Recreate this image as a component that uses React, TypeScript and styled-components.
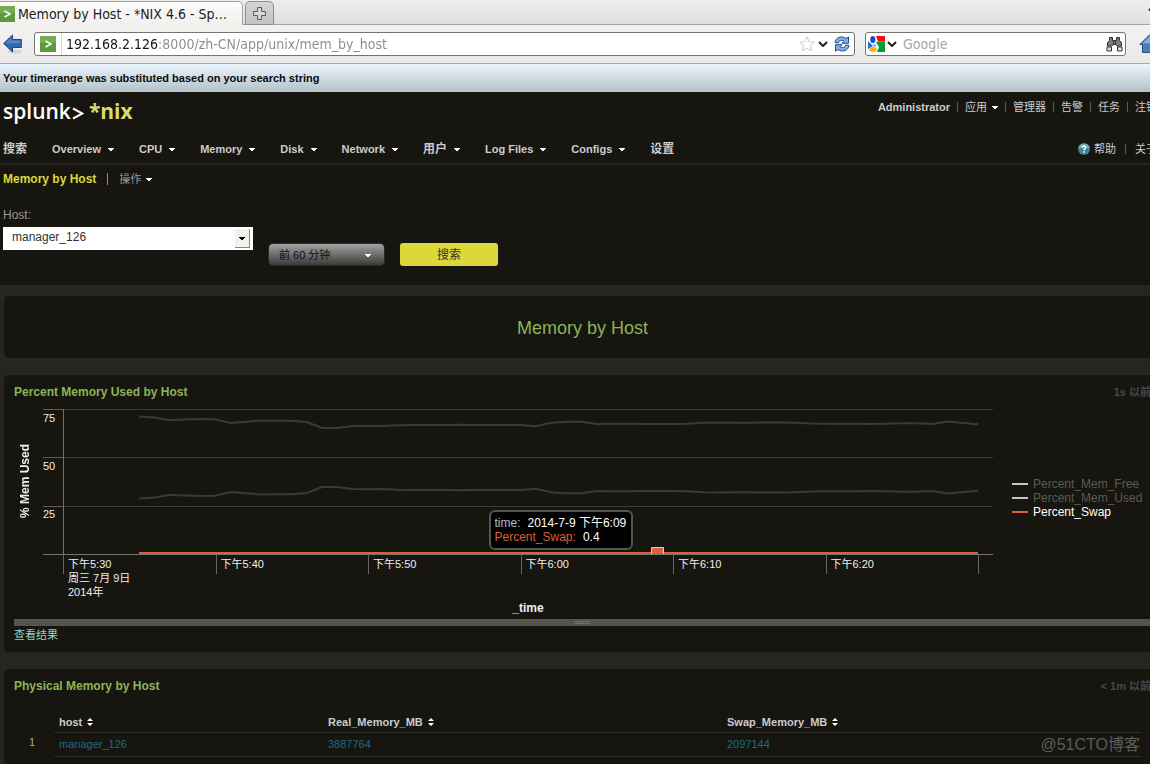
import React from "react";
import styled, { createGlobalStyle } from "styled-components";

const sans = `"Liberation Sans", "Noto Sans CJK SC", sans-serif`;
const chrome = `"DejaVu Sans Condensed", "DejaVu Sans", sans-serif`;
const ink = "#161510";
const stone = "#262522";
const orange = "#d95f3d";

const GlobalStyle = createGlobalStyle`
  *, *::before { box-sizing: border-box; }
  body {
    margin: 0;
    overflow: hidden;
    background: ${stone};
    color: #ccc;
    font: 11px/14px ${sans};
  }
  button, input, select { font: inherit; color: inherit; margin: 0; border: 0; padding: 0; background: none; }
  a { color: inherit; text-decoration: none; }
  svg { display: block; flex: none; }
`;

const Screen = styled.div`
  position: relative;
  min-height: 100vh;
  overflow: hidden;
`;

/* ---------- browser window ---------- */

const TabStrip = styled.div`
  display: flex;
  align-items: flex-end;
  gap: 2px;
  height: 25px;
  border-bottom: 1px solid #a3a3a0;
  background: linear-gradient(#ededeb, #e0dfdd);
`;

const Tab = styled.div`
  display: flex;
  align-items: center;
  gap: 3px;
  width: 243px;
  height: 24px;
  margin-bottom: -1px;
  border: 1px solid #a3a3a0;
  border-width: 1px 1px 0 0;
  border-radius: 0 5px 0 0;
  background: linear-gradient(#fbfbfa, #f1f0ee);
  color: #1c1c1c;
  font: 14px/18px ${chrome};
  white-space: nowrap;
  svg { margin-left: -1px; }
`;

const NewTab = styled.button`
  display: grid;
  place-items: center;
  width: 29px;
  height: 24px;
  margin-bottom: -1px;
  border: 1px solid #8e8e8c;
  border-radius: 5px 5px 0 0;
  background: linear-gradient(#d6d5d3, #c4c3c1);
`;

const TabList = styled.button`
  width: 2px;
  height: 10px;
  margin: 0 0 8px auto;
  overflow: hidden;
`;

const Toolbar = styled.div`
  display: flex;
  align-items: center;
  height: 39px;
  padding-left: 3px;
  border-bottom: 1px solid #a9a9a6;
  background: linear-gradient(#f3f2f0, #eae9e7);
`;

const Field = styled.div<{ $wide?: boolean }>`
  display: flex;
  align-items: center;
  flex: ${(p) => (p.$wide ? "1" : "0 0 261px")};
  min-width: 0;
  height: 24px;
  margin-left: ${(p) => (p.$wide ? 12 : 10)}px;
  padding: 0 ${(p) => (p.$wide ? 4 : 2)}px;
  border: 1px solid #74746f;
  border-radius: 3px;
  background: #fff;
`;

const SiteBadge = styled.div`
  display: flex;
  align-items: center;
  height: 22px;
  padding: 0 5px 0 1px;
  border-right: 1px solid #d8d8d8;
`;

const FieldInput = styled.input`
  flex: 1;
  min-width: 0;
  margin-left: 6px;
  outline: 0;
  color: #8a8a8a;
  font: 14px/20px ${chrome};
  &::placeholder { color: #a5a5a5; opacity: 1; }
`;

const AddressInput = styled(FieldInput)`
  margin-left: 4px;
  background: linear-gradient(90deg, #161616 92px, #8a8a8a 92px);
  -webkit-background-clip: text;
  background-clip: text;
  -webkit-text-fill-color: transparent;
`;

const IconButton = styled.button<{ $gap?: number }>`
  flex: none;
  margin-left: ${(p) => p.$gap ?? 0}px;
`;

const HomeButton = styled(IconButton)`
  width: 11px;
  overflow: visible;
`;

/* ---------- application header ---------- */

const Application = styled.div`
  width: calc(100% + 15px);
`;

const Message = styled.div`
  height: 28px;
  padding-left: 3px;
  background: linear-gradient(#ebf6fe, #b4c0c7);
  color: #0b0b0b;
  font-weight: bold;
  line-height: 28px;
`;

const Header = styled.header`
  padding-bottom: 19px;
  background: ${ink};
`;

const Row = styled.div`
  display: flex;
  justify-content: space-between;
`;

const BrandRow = styled(Row)`
  height: 42px;
  padding: 0 8px 0 3px;
`;

const Logo = styled.a`
  display: flex;
  align-items: center;
  height: 38px;
  color: #fff;
  font: 600 21px/30px "Open Sans", sans-serif;
  svg { margin: 4px 5px 0 1px; }
  b { color: #dcd968; font-weight: 700; }
`;

const Links = styled.nav`
  display: flex;
  align-items: center;
  height: 29px;
  color: #ccc;
  white-space: nowrap;
`;

const Sep = styled.i<{ $space?: number }>`
  width: 1px;
  height: 10px;
  margin: 0 ${(p) => p.$space ?? 7}px;
  background: #5c5c58;
`;

const NavRow = styled(Row)`
  align-items: center;
  height: 31px;
  padding: 0 8px 0 3px;
  border-bottom: 2px solid ${stone};
`;

const Menu = styled(Links)`
  gap: 25px;
  font-weight: bold;
`;

const MenuLink = styled.a<{ $large?: boolean; $gap?: number }>`
  display: flex;
  align-items: center;
  gap: ${(p) => p.$gap ?? 7}px;
  font-size: ${(p) => (p.$large ? 12 : 11)}px;
`;

const TitleRow = styled.div`
  display: flex;
  align-items: center;
  height: 28px;
  padding-left: 3px;
  color: #999;
`;

const TitleSep = styled(Sep)`
  height: 12px;
  background: #8c8c89;
`;

const PageTitle = styled.h1`
  margin: 0;
  color: #dcd83a;
  font-size: 12px;
`;

const Controls = styled.form`
  display: flex;
  align-items: flex-start;
  padding: 15px 3px 0;
`;

const HostField = styled.label`
  display: grid;
  gap: 5px;
  width: 250px;
  color: #999;
  font-size: 12px;
`;

const SelectBox = styled.span`
  position: relative;
  display: block;
  height: 23px;
  background: #fff;
  svg { position: absolute; top: 2px; right: 3px; pointer-events: none; }
`;

const Select = styled.select`
  appearance: none;
  width: 100%;
  height: 20px;
  padding: 0 24px 0 9px;
  color: #333;
  font-size: 12px;
`;

const TimeButton = styled.button`
  display: flex;
  align-items: center;
  justify-content: space-between;
  width: 117px;
  height: 23px;
  margin: 35px 15px 0;
  padding: 0 13px 0 10px;
  border: 1px solid #2c2b28;
  border-radius: 5px;
  background: linear-gradient(#a2a2a2, #3a3a38);
  color: #0c0c0c;
`;

const SearchButton = styled.button`
  width: 98px;
  height: 23px;
  margin-top: 35px;
  border-radius: 3px;
  background: #dcd83a;
  color: #333;
  font-size: 12px;
`;

/* ---------- panels ---------- */

const Panel = styled.section`
  margin: 0 4px 17px;
  padding: 0 10px 8px;
  border-radius: 5px;
  background: ${ink};
`;

const Banner = styled(Panel)`
  margin-top: 11px;
  padding: 21px 0 19px;
  h2 {
    margin: 0;
    color: #8cb455;
    font-size: 18px;
    font-weight: normal;
    line-height: 22px;
    text-align: center;
  }
`;

const PanelHead = styled(Row)`
  align-items: center;
  height: 34px;
  color: #484845;
  font-weight: bold;
  h3 { margin: 0; color: #8cb455; font-size: 12px; }
`;

const Chart = styled.div`
  display: grid;
  grid-template-columns: 29px 1fr 158px;
  grid-template-rows: 145px 47px 14px;
  padding-bottom: 4px;
  color: #eee;
`;

const YTitle = styled.div`
  align-self: center;
  justify-self: start;
  margin-left: 4px;
  writing-mode: vertical-rl;
  transform: rotate(180deg);
  font-size: 12px;
  font-weight: bold;
`;

const Plot = styled.div`
  position: relative;
  display: grid;
  > * { grid-area: 1 / 1; }
`;

const YTicks = styled.div`
  display: grid;
  grid-template-rows: repeat(3, 1fr);
  padding-top: 2px;
`;

const XTicks = styled.div`
  display: grid;
  grid-column: 2;
  grid-template-columns: repeat(6, 61fr) 6fr;
  padding-left: 20px;
`;

const XTick = styled.div`
  height: 20px;
  padding: 3px 0 0 4px;
  border-left: 1px solid #666663;
  white-space: pre;
`;

const XTitle = styled.div`
  grid-column: 2;
  padding-left: 20px;
  font-size: 12px;
  font-weight: bold;
  text-align: center;
`;

const Legend = styled.ul`
  align-self: center;
  margin: 32px 0 0 19px;
  padding: 0;
  list-style: none;
  font-size: 12px;
`;

const LegendItem = styled.li<{ $active?: boolean }>`
  display: flex;
  align-items: center;
  gap: 5px;
  color: ${(p) => (p.$active ? "#fff" : "#5a5a57")};
  &::before {
    content: "";
    width: 16px;
    height: 2px;
    background: ${(p) => (p.$active ? orange : "#c9c3c9")};
  }
`;

const Tooltip = styled.dl`
  position: absolute;
  top: 101px;
  left: calc(47% - 1px);
  display: grid;
  align-content: center;
  height: 40px;
  margin: 0;
  padding: 0 5px 0 4px;
  border: 2px solid #555552;
  border-radius: 6px;
  background: #000;
  color: #fff;
  font-size: 12px;
  white-space: nowrap;
  div { display: flex; gap: 7px; }
  dt { color: #bbb; }
  dd { margin: 0; }
  div + div dt { color: ${orange}; }
`;

const Resizer = styled.div`
  display: grid;
  place-items: center;
  height: 7px;
  background: #555550;
  &::before {
    content: "";
    width: 15px;
    height: 3px;
    border: 1px solid #74746f;
    border-width: 1px 0;
  }
`;

const ResultsLink = styled.a`
  display: inline-block;
  color: #91d3cd;
  line-height: 18px;
`;

const Table = styled.table`
  width: calc(100% - 10px);
  margin-top: 4px;
  border-collapse: collapse;
  table-layout: fixed;
  text-align: left;
`;

const Cell = styled.td`
  height: 24px;
  padding: 0 5px;
  border-bottom: 1px solid #2b2a27;
  color: #1b6b85;
`;

const HeadCell = styled(Cell).attrs({ as: "th", scope: "col" })<{ $width?: number }>`
  height: 25px;
  width: ${(p) => (p.$width ? `${p.$width}px` : "auto")};
  padding-top: 6px;
  color: #ccc;
`;

const NumberCell = styled(Cell)`
  width: 40px;
  padding: 0 19px 4px 0;
  border: 0;
  color: #aaa;
  text-align: right;
`;

const SortButton = styled.button`
  display: flex;
  align-items: center;
  gap: 5px;
  font-weight: bold;
`;

const Watermark = styled.div`
  position: absolute;
  top: 735px;
  right: 10px;
  color: #5d5d5a;
  font-size: 16px;
  line-height: 20px;
`;

/* ---------- drawings ---------- */

const Caret = () => (
  <svg width="6" height="4" viewBox="0 0 6 4" shapeRendering="crispEdges">
    <path d="M0 1h6v1H5v1H4v1H2V3H1V2H0z" fill="#fff" />
  </svg>
);

const SiteIcon = () => (
  <svg width="16" height="16" viewBox="0 0 16 16">
    <rect width="16" height="16" fill="#5b9a38" />
    <rect width="16" height="7" fill="#76ab55" />
    <path d="M5.500 5l5.500 3-5.500 3" fill="none" stroke="#fff" strokeWidth="1.500" />
  </svg>
);

const PlusIcon = () => (
  <svg width="13" height="13" viewBox="0 0 13 13">
    <path d="M4.500 .5h4v4h4v4h-4v4h-4v-4h-4v-4h4z" fill="#d9d8d6" stroke="#5a5a58" />
  </svg>
);

const BackIcon = () => (
  <svg width="19" height="20" viewBox="0 0 19 20">
    <ellipse cx="12" cy="17.500" rx="7" ry="2" fill="#d6d5d3" />
    <path d="M.7 9.500L9.500 1v4.500h8.800v8H9.500V18z" fill="#3369ac" stroke="#1f4478" />
    <path d="M2.500 9.200L8.600 3.300v3.200h8.600v2.700z" fill="#5286c2" />
  </svg>
);

const Chevron = () => (
  <svg width="10" height="6" viewBox="0 0 10 6">
    <path d="M1 1l4 4 4-4" fill="none" stroke="#222" strokeWidth="2" />
  </svg>
);

const StarIcon = () => (
  <svg width="16" height="16" viewBox="0 0 16 16">
    <path
      d="M8 .8l2.100 4.900 5.300.5-4 3.500 1.200 5.300L8 12.200l-4.600 2.800 1.200-5.300-4-3.500 5.300-.5z"
      fill="#fff"
      stroke="#cfcfcf"
    />
  </svg>
);

const ReloadIcon = () => (
  <svg width="16" height="16" viewBox="0 0 16 16">
    <g fill="#86aede" stroke="#234f8c" strokeLinejoin="round">
      <path d="M1 6.500C1.500 1.500 7.500-.8 12 2.500L14.500.8V7.300H8l2.200-2.200C7.500 3.600 4.800 4.600 4.300 7z" />
      <path d="M15 9.500c-.5 5-6.500 7.300-11 4L1.500 15.200V8.700H8l-2.200 2.200c2.700 1.500 5.400.5 5.900-1.900z" />
    </g>
  </svg>
);

const GoogleIcon = () => (
  <svg width="17" height="16" viewBox="0 0 17 16">
    <path d="M8 0h9v5.500H10z" fill="#f20d0d" />
    <path d="M8 6l2-.5h7V16H9l2-5z" fill="#0a9a3a" />
    <path d="M0 5l5 5-5 3z" fill="#2b66d9" />
    <ellipse cx="4.800" cy="3.500" rx="2.600" ry="3.500" fill="#1550c8" />
    <path d="M5 7.500l4 2-3 2z" fill="#7fb2e8" />
    <ellipse cx="5" cy="13.500" rx="3.800" ry="2.400" fill="#f3b414" />
  </svg>
);

const BinocularsIcon = () => (
  <svg width="17" height="16" viewBox="0 0 17 16">
    <g fill="#7c7f7a" stroke="#30332f">
      <path d="M3.500 1.500h3v3h4v-3h3v3l2 2v3.500h-4.500l-1-1.500H7l-1 1.500H1.500V6.500l2-2z" />
      <path d="M1 11h4.500v4H1zM11.500 11H16v4h-4.500z" fill="#dcdfd8" />
      <path d="M7.500 5v4M9.500 5v4" />
    </g>
  </svg>
);

const HomeIcon = () => (
  <svg width="22" height="20" viewBox="0 0 22 20">
    <path d="M.8 10.500L10.500 1l9.700 9.500h-2.700v8H3.500v-8z" fill="#4a7dbb" stroke="#24508c" />
    <path d="M3.500 9.200L10.500 2.500l7 6.700z" fill="#86aede" />
  </svg>
);

const PromptIcon = () => (
  <svg width="12" height="14" viewBox="0 0 12 14">
    <path d="M1 2.500l9.500 5L1 12.500" fill="none" stroke="#fff" strokeWidth="2" />
  </svg>
);

const HelpIcon = () => (
  <svg width="12" height="12" viewBox="0 0 12 12">
    <circle cx="6" cy="6" r="6" fill="#3d8494" />
    <path d="M.3 5a6 6 0 0 1 11.400 0z" fill="#78a9b5" />
    <path d="M4.200 4.500C4.400 2.200 7.900 2.500 7.700 4.500 7.600 5.700 6 5.600 6 7.200M6 8.200v1.500" fill="none" stroke="#fff" strokeWidth="1.500" />
  </svg>
);

const DropIcon = () => (
  <svg width="15" height="19" viewBox="0 0 15 19" shapeRendering="crispEdges">
    <path d="M0 0h15v19H0z" fill="#f2f2f0" />
    <path d="M14 0h1v19H0v-1h14z" fill="#858583" />
    <path d="M4 8h6v1H9v1H8v1H6v-1H5V9H4z" fill="#000" />
  </svg>
);

const SortIcon = () => (
  <svg width="6" height="8" viewBox="0 0 6 8">
    <path d="M0 3L3 0l3 3zM0 5h6L3 8z" fill="#fff" />
  </svg>
);

/* ---------- chart data: one sample per minute, as heights in the plot ---------- */

const freeLine = [
  7.5, 8.5, 11.3, 10.5, 10, 10.3, 14, 12.8, 11.5, 11.7, 11.7, 13, 19, 19, 17, 16.7, 17, 16.3, 16,
  16, 16, 15.8, 16, 16, 16, 16, 17.3, 13.7, 12.7, 12.7, 15, 14.7, 14.8, 15, 15, 15, 14.8, 13.7,
  13.5, 13.7, 13.7, 13.5, 13.5, 13.8, 14.6, 14.8, 14.7, 14.8, 15, 14.8, 14.3, 14.2, 15, 12.5, 14,
  15.3,
];
const usedLine = freeLine.map((y) => 97 - y);
const firstX = 96;
const stepX = (935 - firstX) / (freeLine.length - 1);
const toPoints = (ys: number[]) => ys.map((y, i) => `${(firstX + i * stepX).toFixed(1)},${y}`).join(" ");

const PlotLines = () => (
  <svg width="100%" height="146" viewBox="0 0 950 146" preserveAspectRatio="none">
    <g shapeRendering="crispEdges">
      <path d="M0 .5h950M0 48.500h950M0 97.500h950" stroke="#3b3b38" />
      <path d="M0 .5h20M0 48.500h20M0 97.500h20" stroke="#5c5c59" />
      <path d="M0 145.500h950M20.500 0v146" stroke="#72726f" />
    </g>
    <g fill="none" stroke="#3b3a37" strokeWidth="2">
      <polyline points={toPoints(freeLine)} />
      <polyline points={toPoints(usedLine)} />
    </g>
    <path d="M96 144h839" stroke={orange} strokeWidth="2" />
    <path d="M608.500 145v-6.500h12v6.500" fill={orange} stroke="#e8c9c0" />
  </svg>
);

const menu: { label: string; drop?: boolean; large?: boolean }[] = [
  { label: "搜索", large: true },
  { label: "Overview", drop: true },
  { label: "CPU", drop: true },
  { label: "Memory", drop: true },
  { label: "Disk", drop: true },
  { label: "Network", drop: true },
  { label: "用户", drop: true, large: true },
  { label: "Log Files", drop: true },
  { label: "Configs", drop: true },
  { label: "设置", large: true },
];

const times = ["下午5:30\n周三 7月 9日\n2014年", "下午5:40", "下午5:50", "下午6:00", "下午6:10", "下午6:20", ""];

const columns: { name: string; width?: number }[] = [
  { name: "host", width: 269 },
  { name: "Real_Memory_MB", width: 399 },
  { name: "Swap_Memory_MB" },
];

export default function App() {
  return (
    <Screen>
      <GlobalStyle />
      <TabStrip>
        <Tab>
          <SiteIcon />
          <span>Memory by Host - *NIX 4.6 - Sp…</span>
        </Tab>
        <NewTab aria-label="New tab"><PlusIcon /></NewTab>
        <TabList aria-label="List all tabs"><Chevron /></TabList>
      </TabStrip>
      <Toolbar>
        <IconButton aria-label="Back"><BackIcon /></IconButton>
        <Field $wide>
          <SiteBadge><SiteIcon /></SiteBadge>
          <AddressInput aria-label="Address" defaultValue="192.168.2.126:8000/zh-CN/app/unix/mem_by_host" />
          <IconButton aria-label="Bookmark"><StarIcon /></IconButton>
          <IconButton aria-label="History" $gap={3}><Chevron /></IconButton>
          <IconButton aria-label="Reload" $gap={6}><ReloadIcon /></IconButton>
        </Field>
        <Field>
          <IconButton aria-label="Search engine"><GoogleIcon /></IconButton>
          <IconButton aria-label="Choose engine" $gap={2}><Chevron /></IconButton>
          <FieldInput aria-label="Web search" placeholder="Google" />
          <IconButton aria-label="Find"><BinocularsIcon /></IconButton>
        </Field>
        <HomeButton aria-label="Home" $gap={13}><HomeIcon /></HomeButton>
      </Toolbar>

      <Application>
        <Message role="status">Your timerange was substituted based on your search string</Message>
        <Header>
          <BrandRow>
            <Logo href="#">splunk<PromptIcon /><b>*nix</b></Logo>
            <Links>
              <b>Administrator</b>
              <Sep />
              <MenuLink href="#" $gap={5}>应用<Caret /></MenuLink>
              <Sep />
              <a href="#">管理器</a>
              <Sep />
              <a href="#">告警</a>
              <Sep />
              <a href="#">任务</a>
              <Sep />
              <a href="#">注销</a>
            </Links>
          </BrandRow>
          <NavRow>
            <Menu>
              {menu.map(({ label, drop, large }) => (
                <MenuLink key={label} href="#" $large={large}>{label}{drop && <Caret />}</MenuLink>
              ))}
            </Menu>
            <Links>
              <MenuLink href="#" $gap={4}><HelpIcon />帮助</MenuLink>
              <Sep $space={9} />
              <a href="#">关于</a>
            </Links>
          </NavRow>
          <TitleRow>
            <PageTitle>Memory by Host</PageTitle>
            <TitleSep $space={11} />
            <MenuLink href="#" $gap={5}>操作<Caret /></MenuLink>
          </TitleRow>
          <Controls onSubmit={(e) => e.preventDefault()}>
            <HostField>
              Host:
              <SelectBox>
                <Select defaultValue="manager_126"><option>manager_126</option></Select>
                <DropIcon />
              </SelectBox>
            </HostField>
            <TimeButton type="button">前 60 分钟<Caret /></TimeButton>
            <SearchButton type="submit">搜索</SearchButton>
          </Controls>
        </Header>

        <Banner><h2>Memory by Host</h2></Banner>

        <Panel>
          <PanelHead><h3>Percent Memory Used by Host</h3><span>1s 以前</span></PanelHead>
          <Chart>
            <YTitle>% Mem Used</YTitle>
            <Plot>
              <PlotLines />
              <YTicks><span>75</span><span>50</span><span>25</span></YTicks>
              <Tooltip>
                <div><dt>time:</dt><dd>2014-7-9 下午6:09</dd></div>
                <div><dt>Percent_Swap:</dt><dd>0.4</dd></div>
              </Tooltip>
            </Plot>
            <Legend>
              <LegendItem>Percent_Mem_Free</LegendItem>
              <LegendItem>Percent_Mem_Used</LegendItem>
              <LegendItem $active>Percent_Swap</LegendItem>
            </Legend>
            <XTicks>{times.map((t) => <XTick key={t}>{t}</XTick>)}</XTicks>
            <XTitle>_time</XTitle>
          </Chart>
          <Resizer />
          <ResultsLink href="#">查看结果</ResultsLink>
        </Panel>

        <Panel>
          <PanelHead><h3>Physical Memory by Host</h3><span>&lt; 1m 以前</span></PanelHead>
          <Table>
            <thead>
              <tr>
                <NumberCell />
                {columns.map(({ name, width }) => (
                  <HeadCell key={name} $width={width}><SortButton>{name}<SortIcon /></SortButton></HeadCell>
                ))}
              </tr>
            </thead>
            <tbody>
              <tr>
                <NumberCell>1</NumberCell>
                <Cell><a href="#">manager_126</a></Cell>
                <Cell><a href="#">3887764</a></Cell>
                <Cell><a href="#">2097144</a></Cell>
              </tr>
            </tbody>
          </Table>
        </Panel>
      </Application>
      <Watermark>@51CTO博客</Watermark>
    </Screen>
  );
}
